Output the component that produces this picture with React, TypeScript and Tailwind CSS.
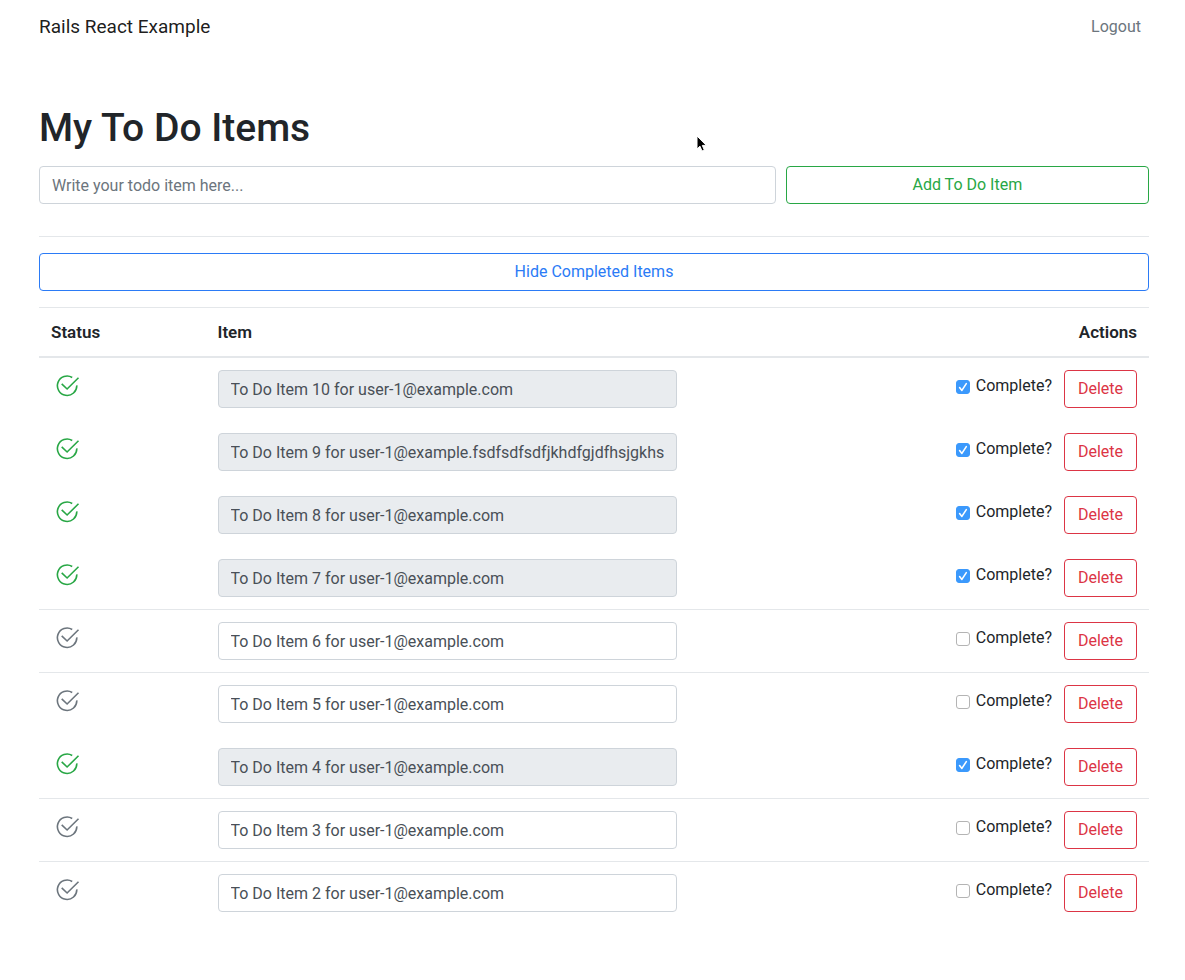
import { useState } from "react";

type Todo = { id: number; title: string; complete: boolean };

const initialTodos: Todo[] = [
  { id: 10, title: "To Do Item 10 for user-1@example.com", complete: true },
  { id: 9, title: "To Do Item 9 for user-1@example.fsdfsdfsdfjkhdfgjdfhsjgkhsdfg", complete: true },
  { id: 8, title: "To Do Item 8 for user-1@example.com", complete: true },
  { id: 7, title: "To Do Item 7 for user-1@example.com", complete: true },
  { id: 6, title: "To Do Item 6 for user-1@example.com", complete: false },
  { id: 5, title: "To Do Item 5 for user-1@example.com", complete: false },
  { id: 4, title: "To Do Item 4 for user-1@example.com", complete: true },
  { id: 3, title: "To Do Item 3 for user-1@example.com", complete: false },
  { id: 2, title: "To Do Item 2 for user-1@example.com", complete: false },
];

function StatusIcon({ complete }: { complete: boolean }) {
  return (
    <svg
      viewBox="0 0 24 24"
      className={`ml-[5px] mt-1 size-6 ${complete ? "text-[#28a745]" : "text-[#6c757d]"}`}
      fill="none"
      stroke="currentColor"
      strokeWidth="1.6"
      role="img"
      aria-label={complete ? "Complete" : "Incomplete"}
    >
      <path d="M16.2 3.5A9.7 9.7 0 1 0 20.8 11.4" />
      <path d="M5.7 9.8 11.1 15 22.5 3.8" />
    </svg>
  );
}

function TodoRow({ todo, first, onToggle, onDelete }: { todo: Todo; first: boolean; onToggle: () => void; onDelete: () => void }) {
  const line = first ? "" : todo.complete ? "border-t border-transparent" : "border-t border-[#e4e7ea]";
  return (
    <tr className="align-top">
      <td className={`px-3 py-3 ${line}`}>
        <StatusIcon complete={todo.complete} />
      </td>
      <td className={`px-3 py-3 ${line}`}>
        <input
          type="text"
          aria-label={`Item ${todo.id}`}
          defaultValue={todo.title}
          disabled={todo.complete}
          className="block h-[38px] w-full rounded border border-[#ced4da] bg-white px-3 text-[#495057] disabled:bg-[#e9ecef]"
        />
      </td>
      <td className={`px-3 py-3 ${line}`}>
        <div className="flex items-start justify-end gap-3">
          <label className="mt-1 flex items-center gap-[6px] leading-6">
            <span className="mt-0.5 grid size-[14px]">
              <input
                type="checkbox"
                checked={todo.complete}
                onChange={onToggle}
                className="peer col-start-1 row-start-1 size-[14px] appearance-none rounded-[3px] border border-[#b4b4b4] bg-white checked:border-[#3b99fc] checked:bg-[#3b99fc]"
              />
              <svg viewBox="0 0 14 14" fill="none" stroke="white" strokeWidth="1.6" strokeLinecap="round" strokeLinejoin="round" className="pointer-events-none invisible col-start-1 row-start-1 size-[14px] peer-checked:visible">
                <path d="M3.6 7.6 5.9 10.4 10.3 3.6" />
              </svg>
            </span>
            Complete?
          </label>
          <button type="button" onClick={onDelete} className="h-[38px] w-[73px] rounded border border-[#dc3545] text-[#dc3545]">
            Delete
          </button>
        </div>
      </td>
    </tr>
  );
}

export default function App() {
  const [todos, setTodos] = useState(initialTodos);
  const [hidden, setHidden] = useState(false);
  const visible = hidden ? todos.filter((t) => !t.complete) : todos;

  return (
    <div className="relative min-h-screen bg-white pr-9 pb-14 pl-[39px] font-[Roboto,sans-serif] text-base text-[#212529]">
      <nav className="flex h-[54px] items-center justify-between">
        <a href="#" className="text-[19px] text-black/90">Rails React Example</a>
        <a href="#" className="px-2 text-[#6c757d]">Logout</a>
      </nav>
      <main className="pt-[50px]">
        <h1 className="mb-[14px] text-[39px] leading-[48px] font-medium">My To Do Items</h1>
        <form className="grid grid-cols-3 gap-[10px]" onSubmit={(e) => e.preventDefault()}>
          <input
            type="text"
            aria-label="New to do item"
            placeholder="Write your todo item here..."
            className="col-span-2 h-[38px] w-full rounded border border-[#ced4da] px-3 placeholder:text-[#6c757d]"
          />
          <button type="submit" className="h-[38px] rounded border border-[#28a745] text-[#28a745]">
            Add To Do Item
          </button>
        </form>
        <hr className="mt-8 mb-4 border-t border-[#e4e7ea]" />
        <button type="button" onClick={() => setHidden(!hidden)} className="mb-4 block h-[38px] w-full rounded border border-[#2b7bf6] text-[#2b7bf6]">
          {hidden ? "Show" : "Hide"} Completed Items
        </button>
        <table className="w-full table-fixed border-separate border-spacing-0">
          <thead>
            <tr className="text-left text-[17px] leading-6">
              <th className="w-[15%] border-t border-b-2 border-[#e4e7ea] p-3 font-semibold">Status</th>
              <th className="w-[43.6%] border-t border-b-2 border-[#e4e7ea] p-3 font-semibold">Item</th>
              <th className="border-t border-b-2 border-[#e4e7ea] p-3 text-right font-semibold">Actions</th>
            </tr>
          </thead>
          <tbody>
            {visible.map((todo, i) => (
              <TodoRow
                key={todo.id}
                todo={todo}
                first={i === 0}
                onToggle={() => setTodos(todos.map((t) => (t.id === todo.id ? { ...t, complete: !t.complete } : t)))}
                onDelete={() => setTodos(todos.filter((t) => t.id !== todo.id))}
              />
            ))}
          </tbody>
        </table>
      </main>
      <svg viewBox="0 0 12 18" className="pointer-events-none absolute top-[135px] left-[696px] h-[18px] w-3" aria-hidden="true">
        <path d="M1 1v13l3-2.8 2 4.8 2.3-1-2-4.6h4z" fill="black" stroke="white" strokeWidth="1" />
      </svg>
    </div>
  );
}
